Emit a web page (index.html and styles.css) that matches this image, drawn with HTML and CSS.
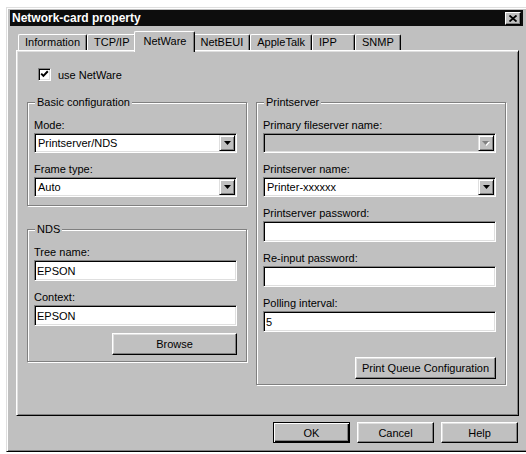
FILE: index.html
```html
<!DOCTYPE html>
<html lang="en">
<head>
    <meta charset="UTF-8">
    <title>Network-card property</title>
    <link rel="stylesheet" href="styles.css">
</head>
<body>
    <div class="window">
        <div class="titlebar">
            <span class="title">Network-card property</span>
            <span class="close-btn">
                <svg width="8" height="7" viewBox="0 0 8 7"><path d="M0.5 0.5 L7.5 6.5 M7.5 0.5 L0.5 6.5" stroke="#000" stroke-width="1.8" fill="none"/></svg>
            </span>
        </div>

        <div class="tabs">
            <span class="tab">Information</span>
            <span class="tab">TCP/IP</span>
            <span class="tab active">NetWare</span>
            <span class="tab">NetBEUI</span>
            <span class="tab">AppleTalk</span>
            <span class="tab">IPP</span>
            <span class="tab">SNMP</span>
        </div>

        <div class="panel">
            <div class="check-row">
                <span class="checkbox">
                    <svg width="9" height="9" viewBox="0 0 9 9"><path d="M1.2 3.6 L3.4 5.9 L7.8 1.3" stroke="#000" stroke-width="2" fill="none"/></svg>
                </span>
                <span>use NetWare</span>
            </div>

            <div class="columns">
                <div class="col-left">
                    <div class="group basic">
                        <span class="legend">Basic configuration</span>
                        <div class="field">
                            <div class="label">Mode:</div>
                            <div class="combo">
                                <span class="combo-value">Printserver/NDS</span>
                                <span class="drop"><svg width="7" height="4" viewBox="0 0 7 4"><polygon points="0,0 7,0 3.5,4" fill="#000"/></svg></span>
                            </div>
                        </div>
                        <div class="field">
                            <div class="label">Frame type:</div>
                            <div class="combo">
                                <span class="combo-value">Auto</span>
                                <span class="drop"><svg width="7" height="4" viewBox="0 0 7 4"><polygon points="0,0 7,0 3.5,4" fill="#000"/></svg></span>
                            </div>
                        </div>
                    </div>

                    <div class="group nds">
                        <span class="legend">NDS</span>
                        <div class="field">
                            <div class="label">Tree name:</div>
                            <input class="textbox" type="text" value="EPSON">
                        </div>
                        <div class="field">
                            <div class="label">Context:</div>
                            <input class="textbox" type="text" value="EPSON">
                        </div>
                        <button class="btn browse-btn">Browse</button>
                    </div>
                </div>

                <div class="group printserver">
                    <span class="legend">Printserver</span>
                    <div class="field">
                        <div class="label">Primary fileserver name:</div>
                        <div class="combo disabled">
                            <span class="combo-value"></span>
                            <span class="drop"><svg width="8" height="5" viewBox="0 0 8 5"><polygon points="1,1 8,1 4.5,5" fill="#fff"/><polygon points="0,0 7,0 3.5,4" fill="#808080"/></svg></span>
                        </div>
                    </div>
                    <div class="field">
                        <div class="label">Printserver name:</div>
                        <div class="combo">
                            <span class="combo-value">Printer-xxxxxx</span>
                            <span class="drop"><svg width="7" height="4" viewBox="0 0 7 4"><polygon points="0,0 7,0 3.5,4" fill="#000"/></svg></span>
                        </div>
                    </div>
                    <div class="field">
                        <div class="label">Printserver password:</div>
                        <input class="textbox" type="text" value="">
                    </div>
                    <div class="field">
                        <div class="label">Re-input password:</div>
                        <input class="textbox" type="text" value="">
                    </div>
                    <div class="field">
                        <div class="label">Polling interval:</div>
                        <input class="textbox" type="text" value="5">
                    </div>
                    <button class="btn queue-btn">Print Queue Configuration</button>
                </div>
            </div>
        </div>

        <div class="buttons">
            <button class="btn dialog-btn default">OK</button>
            <button class="btn dialog-btn">Cancel</button>
            <button class="btn dialog-btn">Help</button>
        </div>
    </div>
</body>
</html>
```

FILE: styles.css
```css
* {
    margin: 0;
    padding: 0;
    box-sizing: border-box;
    font-family: "Liberation Sans", Arial, Helvetica, sans-serif;
}
body {
    background: #fff;
    font-size: 11px;
    color: #000;
    overflow: hidden;
}
.window {
    margin: 7px 0 0 6px;
    width: 520px;
    height: 445px;
    padding: 2px 3px 0 3px;
    background: #c0c0c0;
    border-left: 1px solid #dfdfdf;
    border-top: 1px solid #dfdfdf;
    border-bottom: 1px solid #000;
    box-shadow: inset 1px 1px 0 #fff, inset 0 -1px 0 #808080;

    display: flex;
    flex-direction: column;
}

/* title */
.titlebar {
    height: 16px;
    background: #0d0d0d;
    display: flex;
    align-items: center;
    justify-content: space-between;
    padding: 0 2px;
}
.title {
    color: #fff;
    font-weight: bold;
    font-size: 12px;
}
.close-btn {
    width: 16px;
    height: 13px;
    background: #c0c0c0;
    border: 1px solid;
    border-color: #fff #000 #000 #fff;
    box-shadow: inset -1px -1px 0 #808080;
    display: flex;
    align-items: center;
    justify-content: center;
}

/* tabs */
.tabs {
    margin: 5px 0 0 6px;
    height: 19px;
    padding-left: 2px;
    display: flex;
    align-items: flex-end;
}
.tab {
    height: 16px;
    line-height: 14px;
    padding: 0 6px;
    min-width: 43px;
    background: #c0c0c0;
    border-left: 1px solid #fff;
    border-top: 1px solid #fff;
    border-right: 1px solid #000;
    border-radius: 2px 2px 0 0;
    box-shadow: inset -1px 0 0 #808080;
    white-space: nowrap;
}
.tab.active {
    height: 21px;
    padding: 2px 8px 0 8px;
    margin: 0 -2px -2px -2px;
    position: relative;
    z-index: 1;
}

/* panel */
.panel {
    margin: 0 4px 0 6px;
    height: 366px;
    padding: 17px 0 0 10px;
    border-left: 1px solid #fff;
    border-top: 1px solid #fff;
    border-right: 1px solid #000;
    border-bottom: 1px solid #000;
    box-shadow: inset 1px 1px 0 #dfdfdf, inset -1px -1px 0 #808080;
}
.check-row {
    display: flex;
    align-items: center;
    height: 13px;
    margin-left: 11px;
}
.checkbox {
    width: 13px;
    height: 13px;
    margin-right: 7px;
    background: #fff;
    border: 1px solid;
    border-color: #808080 #fff #fff #808080;
    box-shadow: inset 1px 1px 0 #000, inset -1px -1px 0 #dfdfdf;
    display: flex;
    align-items: center;
    justify-content: center;
}
.columns {
    margin-top: 21px;
    display: flex;
    align-items: flex-start;
    gap: 9px;
}
.col-left {
    width: 220px;
}

/* group boxes */
.group {
    border: 1px solid #808080;
    box-shadow: inset 1px 1px 0 #fff, 1px 1px 0 #fff;
    padding: 0 9px 0 6px;
}
.group.basic {
    padding-bottom: 8px;
}
.group.nds {
    margin-top: 23px;
    padding-bottom: 6px;
}
.group.printserver {
    width: 250px;
    padding-bottom: 5px;
}
.legend {
    display: block;
    width: fit-content;
    margin: -7px 0 1px 1px;
    padding: 0 2px;
    line-height: 13px;
    background: #c0c0c0;
}
.field {
    margin-top: 9px;
}
.label {
    line-height: 14px;
    margin-bottom: 1px;
}

/* controls */
.combo {
    height: 20px;
    padding: 1px;
    background: #fff;
    border: 1px solid;
    border-color: #808080 #fff #fff #808080;
    box-shadow: inset 1px 1px 0 #000, inset -1px -1px 0 #dfdfdf;
    display: flex;
    align-items: center;
}
.combo.disabled {
    background: #c0c0c0;
}
.combo-value {
    flex: 1;
    padding-left: 2px;
    line-height: 16px;
}
.drop {
    width: 16px;
    height: 16px;
    background: #c0c0c0;
    border: 1px solid;
    border-color: #dfdfdf #000 #000 #dfdfdf;
    box-shadow: inset 1px 1px 0 #fff, inset -1px -1px 0 #808080;
    display: flex;
    align-items: center;
    justify-content: center;
}
.textbox {
    display: block;
    width: 100%;
    height: 21px;
    padding: 0 2px;
    font-size: 11px;
    background: #fff;
    border: 1px solid;
    border-color: #808080 #fff #fff #808080;
    box-shadow: inset 1px 1px 0 #000, inset -1px -1px 0 #dfdfdf;
    outline: none;
}
.btn {
    display: block;
    height: 22px;
    font-size: 11px;
    color: #000;
    background: #c0c0c0;
    border: 1px solid;
    border-color: #fff #000 #000 #fff;
    box-shadow: inset -1px -1px 0 #808080, inset 1px 1px 0 #dfdfdf;
}
.browse-btn {
    width: 125px;
    margin: 7px 0 0 auto;
}
.queue-btn {
    width: 141px;
    margin: 25px 0 0 auto;
}

/* dialog buttons */
.buttons {
    margin: 6px 5px 0 0;
    display: flex;
    justify-content: flex-end;
    gap: 7px;
}
.dialog-btn {
    width: 77px;
    height: 21px;
}
.dialog-btn.default {
    border: 1px solid #000;
    box-shadow: inset 1px 1px 0 #fff, inset -1px -1px 0 #000, inset -2px -2px 0 #808080;
}
```
